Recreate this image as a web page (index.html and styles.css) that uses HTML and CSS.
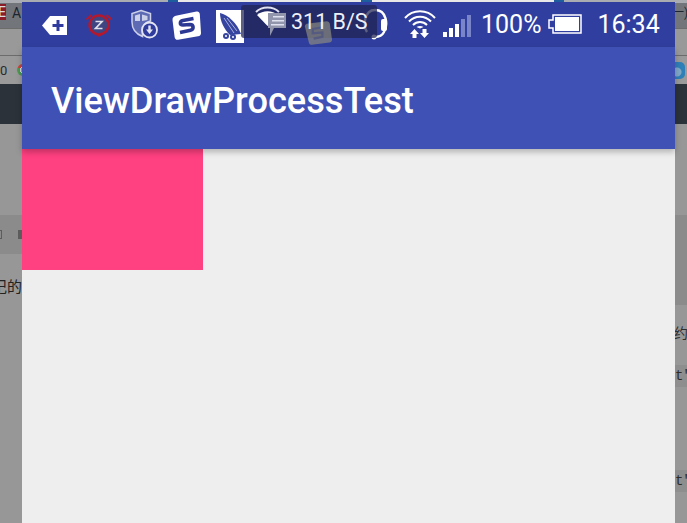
FILE: index.html
```html
<!DOCTYPE html>
<html lang="en">
<head>
    <meta charset="UTF-8">
    <meta name="viewport" content="width=device-width, initial-scale=1.0">
    <title>ViewDrawProcessTest</title>
    <link rel="stylesheet" href="styles.css">
</head>
<body>
    <div class="desk">
        <!-- browser page showing behind the phone, left side -->
        <div class="strip strip-left">
            <div class="band b-top"></div>
            <div class="band b-tabs"><span class="fav">E</span><span class="tab-text">A</span></div>
            <div class="band b-addr"></div>
            <div class="band b-marks"><span class="mark-text">0</span><span class="chrome"></span></div>
            <div class="band b-dark"></div>
            <div class="band b-page h91"></div>
            <div class="band b-tool"><span class="tool-glyph"></span><span class="tool-glyph cut"></span></div>
            <div class="band b-page h-rest"><span class="cn">记的</span></div>
        </div>

        <div class="phone">
            <div class="phone-gap">
                <i class="seg seg-grey w146"></i>
                <i class="seg seg-blue w10"></i>
                <i class="seg seg-white w183"></i>
                <i class="seg seg-blue w11"></i>
                <i class="seg seg-white w182"></i>
                <i class="seg seg-blue w10"></i>
                <i class="seg seg-grey w111"></i>
            </div>
            <div class="statusbar">
                <svg class="ic ic-tag" width="25" height="19" viewBox="0 0 25 19">
                    <path fill="#fff" d="M8 0H25V19H8L0 9.500Z"/>
                    <path fill="#2f3c9e" d="M14.500 4H17.500V8H21.500V11H17.500V15H14.500V11H10.500V8H14.500Z"/>
                </svg>
                <svg class="ic ic-alarm" width="28" height="26" viewBox="0 0 28 26">
                    <circle cx="14" cy="13" r="9.500" fill="#3e4580" stroke="#b5182c" stroke-width="2.400"/>
                    <path fill="none" stroke="#b5182c" stroke-width="1.800" d="M1.500 7.500L6.500 3M26.500 7.500L21.500 3"/>
                    <path fill="#b5182c" d="M11 22.500H17L14 25Z"/>
                    <path fill="none" stroke="#dfe0ea" stroke-width="1.700" d="M10.500 9.500H17L10.500 16.500H17.500"/>
                </svg>
                <svg class="ic ic-shield" width="28" height="31" viewBox="0 0 28 31">
                    <path fill="#5e6ab4" stroke="#ccd0e8" stroke-width="1.500" d="M11 1.500L20.500 4.500V12C15 13 11.500 17.500 12.500 27.500C6 25 2 20 2 13V4.500Z"/>
                    <path fill="#ccd0e8" d="M5 6.500L10 5V12H5ZM12 5.500L17.500 7V11L12 12Z"/>
                    <circle cx="19.500" cy="21" r="7.500" fill="#2f3c9e" stroke="#e3e5f2" stroke-width="1.800"/>
                    <path fill="#e3e5f2" d="M18.300 16.500H20.700V20.500H23L19.500 25L16 20.500H18.300Z"/>
                </svg>
                <svg class="ic ic-sogou" width="29" height="29" viewBox="0 0 29 29">
                    <path fill="#fff" d="M5 4.500L24.500 0.500C26.500 0.200 27.500 1.200 27.800 3L29 22C29 24 28 25 26 25.300L6 28.800C4 29 3 28 2.600 26L0.500 9C0.300 6.500 2 5 5 4.500Z"/>
                    <path fill="none" stroke="#2b3894" stroke-width="3.600" d="M21.500 7.500L11 9.500C7.500 10.200 7.500 14 11 14L18 13.500C22 13.500 22 18.500 18.500 19.200L8 21.500"/>
                </svg>
                <svg class="ic ic-app" width="28" height="33" viewBox="0 0 28 33">
                    <rect width="28" height="33" fill="#fff"/>
                    <path fill="#35449f" d="M4 3C12 5 21 13 25 24L14 25C8 19 4 11 4 3Z"/>
                    <path fill="none" stroke="#aab2de" stroke-width="1" d="M8 8L18 23M11 8L21 21"/>
                    <circle cx="10" cy="26" r="3" fill="#35449f"/>
                    <circle cx="10" cy="26" r="1" fill="#fff"/>
                    <circle cx="17" cy="27" r="3" fill="#35449f"/>
                    <circle cx="17" cy="27" r="1" fill="#fff"/>
                </svg>
                <svg class="ic ic-headset" width="26" height="34" viewBox="0 0 26 34">
                    <path fill="none" stroke="#fff" stroke-width="2.400" d="M4 25C0 19 1 3 12 3C24 3 25 18 21 25C19 29 15 30 12 30"/>
                    <rect x="18" y="12" width="6" height="12" rx="2" fill="#fff"/>
                    <circle cx="11" cy="30" r="2.500" fill="#fff"/>
                </svg>
                <svg class="ic ic-wifi" width="32" height="31" viewBox="0 0 32 31">
                    <g fill="none" stroke="#fff" stroke-width="2">
                        <path d="M1 9C9 0 23 0 31 9"/>
                        <path d="M5 12.500C11 6 21 6 27 12.500"/>
                        <path d="M9 16C13 12 19 12 23 16"/>
                    </g>
                    <path fill="#fff" d="M12.500 18C14.500 16.500 17.500 16.500 19.500 18L16 19.500Z"/>
                    <path fill="#fff" d="M10.500 20L15 25H12.500V29H8.500V25H6ZM18.500 20H22.500V24H25L20.500 29L16 24H18.500Z"/>
                </svg>
                <svg class="ic ic-signal" width="29" height="22" viewBox="0 0 29 22">
                    <rect x="0" y="17" width="4" height="5" fill="#fff"/>
                    <rect x="6" y="13" width="4" height="9" fill="#fff"/>
                    <rect x="12" y="9" width="4" height="13" fill="#fff"/>
                    <rect x="18" y="4" width="4" height="18" fill="#7a84c8"/>
                    <rect x="24" y="0" width="4" height="22" fill="#7a84c8"/>
                </svg>
                <span class="pct">100%</span>
                <svg class="ic ic-batt" width="34" height="20" viewBox="0 0 34 20">
                    <path fill="none" stroke="#fff" stroke-width="1.500" d="M5 1H33V19H5V14H1V6H5Z"/>
                    <rect x="7" y="3" width="24" height="14" fill="#fff"/>
                </svg>
                <span class="clock">16:34</span>

                <!-- network speed toast lies over the status icons -->
                <div class="toast">
                    <svg class="toast-wifi" width="31" height="31" viewBox="0 0 31 31">
                        <path fill="none" stroke="#dfe1f0" stroke-width="2" d="M1 6C7 0 18 0 24 6"/>
                        <path fill="#fff" d="M2 9C8 4 17 4 23 9L12.500 20Z"/>
                        <path fill="#9296ac" d="M13 7H31V22H19L15 30V22H13Z"/>
                        <path fill="#dfe1f0" d="M18 10H29V11.500H18ZM17 14H29V15.500H17ZM16 18H29V19.500H16Z"/>
                    </svg>
                    <svg class="toast-ghost" width="28" height="25" viewBox="0 0 32 28">
                        <path fill="#8a8a80" fill-opacity=".7" d="M3 4L26 1C28 1 29 2 29.500 4L32 22C32 24 31 25 29 25.500L9 28C7 28 6 27 5.500 25L1 7C1 5.500 2 4.500 3 4Z"/>
                        <path fill="none" stroke="#555a80" stroke-width="2.500" d="M22 8L10 10V15L21 14V19L11 21"/>
                    </svg>
                    <span class="speed">311 B/S</span>
                </div>
            </div>
            <header class="appbar">
                <h1 class="title">ViewDrawProcessTest</h1>
            </header>
            <main class="content">
                <div class="pink-box"></div>
            </main>
        </div>

        <!-- same page on the right side -->
        <div class="strip strip-right">
            <div class="band b-top"></div>
            <div class="band b-tabs b-tabs-right"><span class="tab-text">一)</span></div>
            <div class="band b-addr"></div>
            <div class="band b-marks"><span class="cloud"></span></div>
            <div class="band b-dark"></div>
            <div class="band b-page h91"></div>
            <div class="band b-tool h90"></div>
            <div class="band b-page h60"><span class="cn-right">约力</span></div>
            <div class="band b-code h22"><span class="code">t"</span></div>
            <div class="band b-page h83"></div>
            <div class="band b-code h22"><span class="code">t"</span></div>
            <div class="band b-page h-rest"></div>
        </div>
    </div>
</body>
</html>
```

FILE: styles.css
```css
/* Styling for the page */
body {
    margin: 0;
    overflow: hidden;
    font-family: Roboto, "Noto Sans CJK SC", sans-serif;
    background-color: #979797;
}

.desk {
    display: grid;
    grid-template-columns: 22px 653px 12px;
    width: 687px;
    height: 523px;
}

/* backdrop strips */
.strip {
    display: flex;
    flex-direction: column;
    height: 523px;
    overflow: hidden;
}

.band {
    display: flex;
    align-items: center;
    flex: none;
    overflow: hidden;
    white-space: nowrap;
}

.b-top { height: 3px; background-color: #a9adb1; }
.b-tabs { height: 25px; background-color: #72767b; }
.b-addr { height: 27px; background-color: #999; border-top: 1px solid #6c6c6c; box-sizing: border-box; }
.b-marks { height: 29px; background-color: #9a9a9a; border-top: 1px solid #6c6c6c; box-sizing: border-box; }
.b-dark { height: 40px; background-color: #2b3239; }
.b-page { background-color: #979797; }
.b-tool { height: 39px; background-color: #8b8b8b; }
.b-code { background-color: #8e8e8e; }

.h91 { height: 91px; }
.h90 { height: 90px; }
.h60 { height: 60px; }
.h22 { height: 22px; }
.h83 { height: 83px; }
.h-rest { flex: 1; }

.strip-left .b-tool { gap: 16px; justify-content: flex-end; }
.strip-left .b-tool .tool-glyph:first-child { width: 3px; }
.strip-left .h-rest { align-items: flex-start; justify-content: flex-end; padding-top: 24px; }

.fav {
    width: 6px;
    height: 16px;
    margin-bottom: 8px;
    overflow: hidden;
    background-color: #8c1c28;
    color: #ddd;
    font-size: 14px;
    line-height: 16px;
    direction: rtl;
}

.tab-text {
    margin: 0 0 6px 6px;
    color: #1c2530;
    font-size: 14px;
}

.b-tabs-right .tab-text { margin: 0 0 8px -3px; font-size: 12px; }

.mark-text {
    color: #2a2a2a;
    font-size: 13px;
}

.chrome {
    width: 12px;
    height: 12px;
    margin-left: 10px;
    flex: none;
    border-radius: 50%;
    background: radial-gradient(circle, #7f9fc4 0 25%, #d9d9d9 26% 38%, transparent 39%),
        conic-gradient(#c8453a 0 33%, #d8a824 33% 50%, #4b9a4e 50% 83%, #c8453a 83%);
}

.cloud {
    width: 10px;
    height: 17px;
    border-radius: 0 5px 5px 0;
    background: radial-gradient(circle at 2px 10px, #7fa9c8 0 4px, transparent 5px), #2f7fb8;
}

.tool-glyph {
    width: 5px;
    height: 7px;
    flex: none;
    border: 1px solid #5c5c5c;
}

.tool-glyph.cut {
    width: 2px;
    background-color: #5c5c5c;
}

.cn {
    color: #222;
    font-size: 15px;
    line-height: 18px;
}

.cn-right {
    margin: -6px 0 0 -1px;
    color: #2c2c2c;
    font-size: 14px;
}

.code {
    color: #2c2c2c;
    font-family: "Liberation Mono", monospace;
    font-size: 14px;
}

/* phone */
.phone {
    display: flex;
    flex-direction: column;
    height: 523px;
    background-color: #eeeeee;
}

.phone-gap {
    display: flex;
    height: 2px;
}

.seg-grey { background-color: #a9adb1; }
.seg-white { background-color: #e8e8e8; }
.seg-blue { background-color: #1e5e9e; }

.w10 { width: 10px; }
.w11 { width: 11px; }
.w111 { width: 111px; }
.w146 { width: 146px; }
.w182 { width: 182px; }
.w183 { width: 183px; }

.statusbar {
    position: relative;
    display: flex;
    align-items: center;
    flex: none;
    height: 45px;
    padding-left: 20px;
    background-color: #303f9f;
    color: #fff;
}

.ic {
    flex: none;
    filter: blur(0.3px);
}

.ic-tag { margin-top: 2px; }
.ic-alarm { margin-left: 18px; }
.ic-shield { margin-left: 17px; }
.ic-sogou { margin: 2px 0 0 14px; }
.ic-app { margin: 3px 0 0 15px; }
.ic-headset { margin: -2px 0 0 119px; }
.ic-wifi { margin-left: 15px; }
.ic-signal { margin: 3px 0 0 7px; }
.ic-batt { margin: -1px 0 0 7px; }

.pct {
    margin-left: 9px;
    font-size: 25px;
    white-space: nowrap;
}

.clock {
    margin-left: 15px;
    font-size: 25px;
}

.toast {
    position: absolute;
    left: 219px;
    top: 3px;
    display: flex;
    align-items: center;
    width: 136px;
    height: 33px;
    border-radius: 3px;
    background-color: rgba(30, 35, 80, 0.72);
}

.toast-wifi { margin-left: 14px; flex: none; }

.speed {
    position: relative;
    margin-left: 5px;
    color: #eef0f8;
    font-size: 21.500px;
    white-space: nowrap;
}

.toast-ghost {
    position: absolute;
    left: 63px;
    top: 15px;
}

/* app */
.appbar {
    position: relative;
    display: flex;
    align-items: center;
    flex: none;
    box-sizing: border-box;
    height: 102px;
    padding: 5px 0 0 29px;
    background-color: #3f51b5;
    box-shadow: 0 3px 6px rgba(0, 0, 0, 0.25);
}

.title {
    margin: 0;
    color: #fff;
    font-size: 36.200px;
    font-weight: 500;
    white-space: nowrap;
}

.pink-box {
    width: 181px;
    height: 121px;
    background-color: #ff4081;
}
```
